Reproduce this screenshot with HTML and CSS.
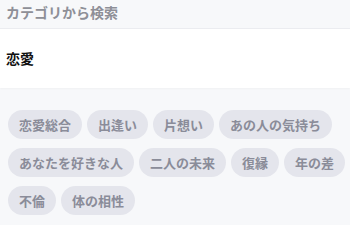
FILE: index.html
```html
<!DOCTYPE html>
<html lang="ja">
<head>
  <meta charset="UTF-8">
  <meta name="viewport" content="width=device-width, initial-scale=1.0">
  <title>カテゴリから検索</title>
  <link rel="stylesheet" href="styles.css">
</head>
<body>
  <div class="section-title">カテゴリから検索</div>

  <div class="category-row">恋愛</div>

  <div class="tag-list">
    <span class="tag">恋愛総合</span>
    <span class="tag">出逢い</span>
    <span class="tag">片想い</span>
    <span class="tag">あの人の気持ち</span>
    <span class="tag">あなたを好きな人</span>
    <span class="tag">二人の未来</span>
    <span class="tag">復縁</span>
    <span class="tag">年の差</span>
    <span class="tag">不倫</span>
    <span class="tag">体の相性</span>
  </div>
</body>
</html>
```

FILE: styles.css
```css
body {
  margin: 0;
  background-color: #f7f8fa;
  font-family: "Noto Sans CJK JP", "Noto Sans", sans-serif;
}

.section-title {
  height: 28px;
  line-height: 25px;
  padding: 0 6px;
  font-size: 14px;
  font-weight: bold;
  color: #8e8f97;
  border-bottom: 1px solid #ebecf0;
}

.category-row {
  height: 59px;
  line-height: 59px;
  padding: 0 6px;
  background-color: white;
  font-size: 14px;
  font-weight: bold;
  color: #111111;
  box-shadow: 0 1px 2px rgba(0, 0, 0, 0.03);
}

.tag-list {
  display: flex;
  flex-wrap: wrap;
  gap: 9px 5px;
  padding: 22px 4px 0 8px;
}

.tag {
  height: 29px;
  line-height: 29px;
  padding: 0 11px;
  border-radius: 15px;
  background-color: #e4e5ec;
  color: #8a8c99;
  font-size: 13px;
  font-weight: bold;
}
```
